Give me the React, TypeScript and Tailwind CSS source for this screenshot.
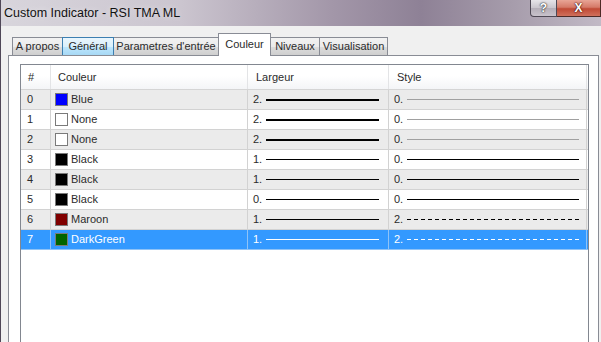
import React from 'react'

type Row = {
  n: number
  name: string
  color: string
  width: string
  style: string
  thick: boolean
  styleKind: 'gray' | 'solid' | 'dash'
}

const rows: Row[] = [
  { n: 0, name: 'Blue', color: '#0000ff', width: '2.', style: '0.', thick: true, styleKind: 'gray' },
  { n: 1, name: 'None', color: '#ffffff', width: '2.', style: '0.', thick: true, styleKind: 'gray' },
  { n: 2, name: 'None', color: '#ffffff', width: '2.', style: '0.', thick: true, styleKind: 'gray' },
  { n: 3, name: 'Black', color: '#000000', width: '1.', style: '0.', thick: false, styleKind: 'solid' },
  { n: 4, name: 'Black', color: '#000000', width: '1.', style: '0.', thick: false, styleKind: 'solid' },
  { n: 5, name: 'Black', color: '#000000', width: '0.', style: '0.', thick: false, styleKind: 'solid' },
  { n: 6, name: 'Maroon', color: '#800000', width: '1.', style: '2.', thick: false, styleKind: 'dash' },
  { n: 7, name: 'DarkGreen', color: '#006400', width: '1.', style: '2.', thick: false, styleKind: 'dash' },
]

const tabs = [
  { label: 'A propos', w: 'w-[51px]', kind: 'normal' },
  { label: 'Général', w: 'w-[52px]', kind: 'hover' },
  { label: "Parametres d'entrée", w: 'w-[106px]', kind: 'normal' },
  { label: 'Couleur', w: 'w-[53px]', kind: 'active' },
  { label: 'Niveaux', w: 'w-[50px]', kind: 'normal' },
  { label: 'Visualisation', w: 'w-[69px]', kind: 'normal' },
]

export default function App() {
  return (
    <div className="w-[601px] h-[342px] overflow-hidden flex flex-col border-l border-[#4f4757] bg-[#f0f0f0] font-['Liberation_Sans',Arial,sans-serif] text-[#2b2b2b]">
      {/* Title bar */}
      <div className="h-[26px] shrink-0 flex items-start bg-[linear-gradient(to_right,#d8d5dc_0%,#cbc5cf_30%,#a397a9_55%,#8e8196_70%,#a69cab_85%,#c2bac6_100%)]">
        <div className="pl-[3px] pt-[5px] text-[12.5px] text-[#111] leading-[16px] [text-shadow:0_0_6px_rgba(255,255,255,0.6)]">
          Custom Indicator - RSI TMA ML
        </div>
        <div className="ml-auto flex">
          <div className="w-[27px] h-[17px] border border-t-0 border-[#4e4854] rounded-bl-[4px] bg-[linear-gradient(to_bottom,#e6e4e8,#c9c5cc_50%,#b4aeb8_51%,#c8c2cb)] flex items-center justify-center text-white font-bold text-[12px] leading-none [text-shadow:0_0_2px_#222,0_0_1px_#222]">
            ?
          </div>
          <div className="w-[44px] h-[17px] border border-t-0 border-l-0 border-[#4e2a26] bg-[linear-gradient(to_bottom,#e8a596,#d57a68_45%,#c04a35_55%,#d0705c)] flex items-center justify-center text-white font-bold text-[12px] leading-none [text-shadow:0_0_2px_#3a0a05,0_0_1px_#3a0a05]">
            X
          </div>
        </div>
      </div>

      {/* Body */}
      <div className="flex-1 flex flex-col pl-[7px] pt-[7px]">
        {/* Tabs */}
        <div className="h-[22px] flex items-end pl-[4px] relative z-10">
          {tabs.map((t, i) =>
            t.kind === 'active' ? (
              <div
                key={t.label}
                className={`${t.w} h-[23px] -mb-px ${i > 0 ? '-ml-px' : ''} border border-b-0 border-[#898c95] bg-white flex items-start justify-center pt-[4px] text-[11px] leading-[13px]`}
              >
                {t.label}
              </div>
            ) : (
              <div
                key={t.label}
                className={`${t.w} h-[18px] ${i > 0 ? '-ml-px' : ''} border border-b-0 ${
                  t.kind === 'hover'
                    ? 'border-[#3c7fb1] bg-[linear-gradient(to_bottom,#eaf6fd,#d9f0fc_50%,#bee6fd_51%,#a7d9f5)] relative z-10'
                    : 'border-[#898c95] bg-[linear-gradient(to_bottom,#f2f2f2,#ebebeb_50%,#dddddd_51%,#cfcfcf)]'
                } flex items-center justify-center text-[11px] leading-[13px]`}
              >
                {t.label}
              </div>
            )
          )}
        </div>

        {/* Tab panel */}
        <div className="w-[591px] flex-1 border border-[#898c95] bg-white pt-[8px] pl-[11px]">
          <div className="w-[569px] h-[300px] border border-[#828790] bg-white text-[11px]">
            {/* Header */}
            <div className="flex h-[25px] border-b border-[#d5d5d5] bg-[linear-gradient(to_bottom,#ffffff,#ffffff_45%,#f4f5f7)]">
              <div className="w-[30px] border-r border-[#e3e4e6] pl-[7px] flex items-center">#</div>
              <div className="w-[197px] border-r border-[#e3e4e6] pl-[7px] flex items-center">Couleur</div>
              <div className="w-[141px] border-r border-[#e3e4e6] pl-[8px] flex items-center">Largeur</div>
              <div className="w-[198px] border-r border-[#e3e4e6] pl-[8px] flex items-center">Style</div>
            </div>

            {rows.map((r) => {
              const selected = r.n === 7
              const bg = selected ? 'bg-[#3399ff] text-white' : r.n % 2 === 0 ? 'bg-[#ebebeb]' : 'bg-white'
              const sep = selected ? 'border-[#8fc3f7]' : 'border-[#d2d2d2]'
              const ink = selected ? '#ffffff' : '#000000'
              return (
                <div key={r.n} className={`flex h-[20px] border-b ${sep} ${bg}`}>
                  <div className={`w-[30px] border-r ${sep} pl-[6px] flex items-center`}>{r.n}</div>
                  <div className={`w-[197px] border-r ${sep} pl-[4px] flex items-center`}>
                    <span
                      className="w-[13px] h-[13px] border border-[#7a7a7a] mr-[3px]"
                      style={{ backgroundColor: r.color }}
                    />
                    {r.name}
                  </div>
                  <div className={`w-[141px] border-r ${sep} pl-[5px] flex items-center`}>
                    <span className="w-[13px]">{r.width}</span>
                    <span
                      className={`w-[113px] ${r.thick ? 'h-[2px]' : 'h-px'}`}
                      style={{ backgroundColor: ink }}
                    />
                  </div>
                  <div className={`w-[198px] border-r ${sep} pl-[5px] flex items-center`}>
                    <span className="w-[13px]">{r.style}</span>
                    {r.styleKind === 'dash' ? (
                      <svg width="172" height="1" className="block">
                        <line x1="0" y1="0.5" x2="172" y2="0.5" stroke={ink} strokeWidth="1" strokeDasharray="4 3" />
                      </svg>
                    ) : (
                      <span
                        className="w-[172px] h-px"
                        style={{ backgroundColor: r.styleKind === 'gray' ? '#a0a0a0' : ink }}
                      />
                    )}
                  </div>
                </div>
              )
            })}
          </div>
        </div>
      </div>
    </div>
  )
}
